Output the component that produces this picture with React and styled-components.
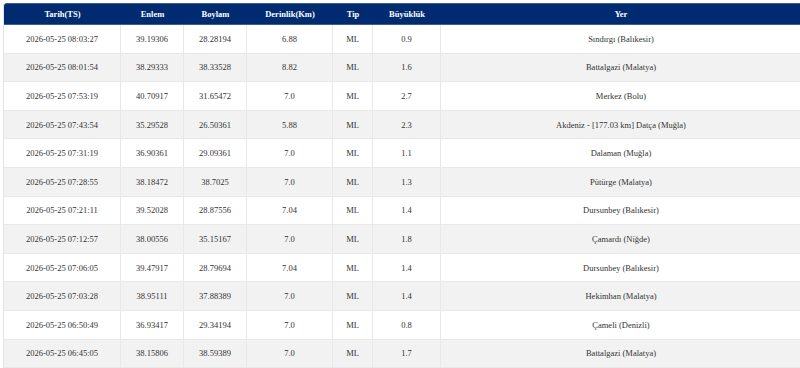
import React from "react";
import styled, { createGlobalStyle } from "styled-components";

const Global = createGlobalStyle`
  html, body { margin: 0; padding: 0; background: #fff; overflow: hidden; }
  body { font-family: "Liberation Serif", "Times New Roman", serif; }
`;

const Page = styled.div`
  padding: 3px 0 0 3px;
  width: 800px;
  box-sizing: border-box;
`;

const Table = styled.table`
  width: 797px;
  table-layout: fixed;
  border-collapse: separate;
  border-spacing: 0;
  font-family: "Liberation Serif", "Times New Roman", serif;
  font-size: 8.5px;
  color: #333;
  border-left: 1px solid #e4e4e4;
`;

const HeadCell = styled.th`
  height: 22px;
  padding: 0;
  box-sizing: border-box;
  background: #012b70;
  color: #fff;
  font-weight: bold;
  text-align: center;
  vertical-align: middle;
  border-top: 1px solid #3d5d95;
  border-bottom: 1px solid #3d5d95;
  &:first-child { border-top-left-radius: 3px; }
`;

const Row = styled.tr`
  background: ${(p) => (p.$alt ? "#f2f2f2" : "#ffffff")};
`;

const Cell = styled.td`
  height: 28.6px;
  padding: 0;
  box-sizing: border-box;
  text-align: center;
  vertical-align: middle;
  border-bottom: 1px solid #e8e8e8;
  border-right: 1px solid #e8e8e8;
  white-space: nowrap;
  &:last-child { border-right: none; }
`;

const widths = [117, 63, 63, 86, 40, 68, 360];
const headers = ["Tarih(TS)", "Enlem", "Boylam", "Derinlik(Km)", "Tip", "Büyüklük", "Yer"];

const rows = [
  ["2026-05-25 08:03:27", "39.19306", "28.28194", "6.88", "ML", "0.9", "Sındırgı (Balıkesir)"],
  ["2026-05-25 08:01:54", "38.29333", "38.33528", "8.82", "ML", "1.6", "Battalgazi (Malatya)"],
  ["2026-05-25 07:53:19", "40.70917", "31.65472", "7.0", "ML", "2.7", "Merkez (Bolu)"],
  ["2026-05-25 07:43:54", "35.29528", "26.50361", "5.88", "ML", "2.3", "Akdeniz - [177.03 km] Datça (Muğla)"],
  ["2026-05-25 07:31:19", "36.90361", "29.09361", "7.0", "ML", "1.1", "Dalaman (Muğla)"],
  ["2026-05-25 07:28:55", "38.18472", "38.7025", "7.0", "ML", "1.3", "Pütürge (Malatya)"],
  ["2026-05-25 07:21:11", "39.52028", "28.87556", "7.04", "ML", "1.4", "Dursunbey (Balıkesir)"],
  ["2026-05-25 07:12:57", "38.00556", "35.15167", "7.0", "ML", "1.8", "Çamardı (Niğde)"],
  ["2026-05-25 07:06:05", "39.47917", "28.79694", "7.04", "ML", "1.4", "Dursunbey (Balıkesir)"],
  ["2026-05-25 07:03:28", "38.95111", "37.88389", "7.0", "ML", "1.4", "Hekimhan (Malatya)"],
  ["2026-05-25 06:50:49", "36.93417", "29.34194", "7.0", "ML", "0.8", "Çameli (Denizli)"],
  ["2026-05-25 06:45:05", "38.15806", "38.59389", "7.0", "ML", "1.7", "Battalgazi (Malatya)"],
];

export default function App() {
  return (
    <>
      <Global />
      <Page>
        <Table>
          <colgroup>
            {widths.map((w, i) => (
              <col key={i} style={{ width: w }} />
            ))}
          </colgroup>
          <thead>
            <tr>
              {headers.map((h) => (
                <HeadCell key={h}>{h}</HeadCell>
              ))}
            </tr>
          </thead>
          <tbody>
            {rows.map((r, i) => (
              <Row key={i} $alt={i % 2 === 1}>
                {r.map((c, j) => (
                  <Cell key={j}>{c}</Cell>
                ))}
              </Row>
            ))}
          </tbody>
        </Table>
      </Page>
    </>
  );
}
